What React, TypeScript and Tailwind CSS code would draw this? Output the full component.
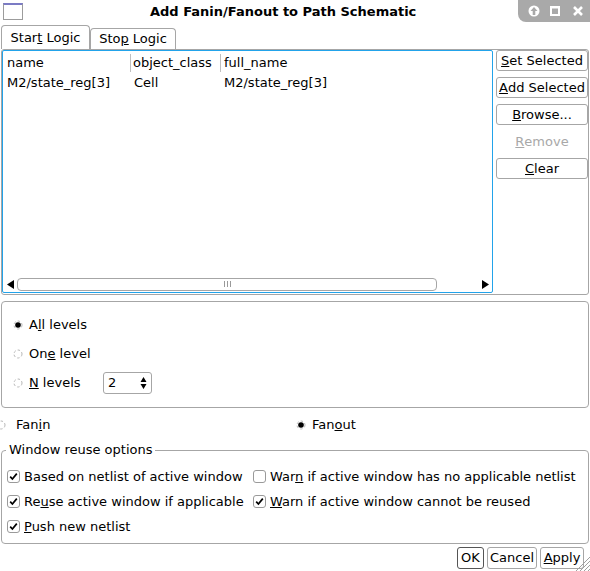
import React from "react";

function Radio({ checked }: { checked?: boolean }) {
    return (
        <svg width="10" height="10" viewBox="0 0 10 10" className="shrink-0">
            <circle cx="5" cy="5" r="4" fill="none" stroke="#b8b8b8" strokeWidth="1" strokeDasharray="2.5 2" />
            {checked && <circle cx="5" cy="5" r="2.8" fill="#000" />}
        </svg>
    );
}

function Check({ checked }: { checked?: boolean }) {
    return (
        <div className="w-[13px] h-[13px] shrink-0 border border-[#9a9a9a] rounded-[3px] flex items-center justify-center bg-white">
            {checked && (
                <svg width="9" height="9" viewBox="0 0 9 9">
                    <path d="M1.2 4.6 L3.4 7 L7.8 1.6" fill="none" stroke="#000" strokeWidth="1.7" />
                </svg>
            )}
        </div>
    );
}

function SideButton({ children, disabled }: { children: React.ReactNode; disabled?: boolean }) {
    return (
        <div
            className={
                disabled
                    ? "h-[21px] flex items-center justify-center text-[#a8a8a8]"
                    : "h-[21px] flex items-center justify-center border border-[#a6a6a6] rounded-[3px]"
            }
        >
            {children}
        </div>
    );
}

export default function App() {
    return (
        <div className="w-[590px] h-[571px] bg-white text-black text-[13px] leading-[16px] font-['DejaVu_Sans',sans-serif] relative overflow-hidden">
            {/* title bar */}
            <div className="h-[24px] flex items-start">
                <div className="mt-[3px] ml-[3px] w-[20px] h-[17px] border border-[#9c9c9c] border-t-[2px] border-t-[#7b7bc4]" />
                <div className="ml-[127px] mt-[4px] font-bold">Add Fanin/Fanout to Path Schematic</div>
                <div className="ml-auto w-[72px] h-[22px] bg-[#a9a9a9] rounded-bl-[8px] flex items-center pl-[10px] gap-[9px]">
                    <svg width="12" height="12" viewBox="0 0 12 12">
                        <circle cx="6" cy="6" r="5.5" fill="#fff" />
                        <path d="M6 2 L9.5 6 L7.3 6 L7.3 10 L4.7 10 L4.7 6 L2.5 6 Z" fill="#a9a9a9" />
                    </svg>
                    <svg width="12" height="12" viewBox="0 0 12 12">
                        <rect x="1" y="1" width="10" height="10" fill="#fff" />
                        <rect x="3" y="3.5" width="6" height="5.5" fill="#a9a9a9" />
                    </svg>
                    <svg width="12" height="12" viewBox="0 0 12 12" className="ml-[2px]">
                        <path d="M2 2 L10 10 M10 2 L2 10" stroke="#fff" strokeWidth="2.6" />
                    </svg>
                </div>
            </div>

            {/* tabs */}
            <div className="h-[24px] mt-[1px] flex items-end">
                <div className="ml-[1px] w-[89px] h-[24px] border border-b-0 border-[#a6a6a6] rounded-t-[4px] flex items-center justify-center">
                    Star<u>t</u>&nbsp;Logic
                </div>
                <div className="w-[86px] h-[21px] border border-b-0 border-[#a6a6a6] rounded-t-[4px] flex items-center justify-center">
                    Sto<u>p</u>&nbsp;Logic
                </div>
            </div>

            {/* tab pane */}
            <div className="mx-[1px] h-[246px] border border-[#a6a6a6] rounded-[3px] flex">
                <div className="w-[491px] h-[243px] border border-[#22a3ea] rounded-[2px] flex flex-col">
                    <div className="h-[24px] flex items-center">
                        <div className="w-[128px] pl-[4px] h-[18px] flex items-center border-r border-[#c0c0c0]">name</div>
                        <div className="w-[90px] pl-[2px] h-[18px] flex items-center border-r border-[#c0c0c0]">object_class</div>
                        <div className="pl-[3px]">full_name</div>
                    </div>
                    <div className="h-[16px] flex items-center">
                        <div className="w-[128px] pl-[4px]">M2/state_reg[3]</div>
                        <div className="w-[90px] pl-[3px]">Cell</div>
                        <div className="pl-[3px]">M2/state_reg[3]</div>
                    </div>
                    <div className="flex-1" />
                    <div className="h-[14px] mb-[1px] flex items-center">
                        <svg width="7" height="9" viewBox="0 0 7 9" className="ml-[4px]">
                            <path d="M0 4.5 L7 0 L7 9 Z" fill="#000" />
                        </svg>
                        <div className="ml-[3px] w-[420px] h-[13px] border border-[#a6a6a6] rounded-[4px] flex items-center justify-center">
                            <svg width="7" height="6" viewBox="0 0 7 6">
                                <path d="M0.5 0 V6 M3.5 0 V6 M6.5 0 V6" stroke="#9a9a9a" strokeWidth="1" />
                            </svg>
                        </div>
                        <svg width="7" height="9" viewBox="0 0 7 9" className="ml-[45px]">
                            <path d="M7 4.5 L0 0 L0 9 Z" fill="#000" />
                        </svg>
                    </div>
                </div>
                <div className="ml-[3px] w-[92px] flex flex-col gap-[6px]">
                    <SideButton><u>S</u>et Selected</SideButton>
                    <SideButton><u>A</u>dd Selected</SideButton>
                    <SideButton><u>B</u>rowse...</SideButton>
                    <SideButton disabled><u>R</u>emove</SideButton>
                    <SideButton><u>C</u>lear</SideButton>
                </div>
            </div>

            {/* levels */}
            <div className="mt-[6px] mx-[1px] h-[107px] border border-[#a6a6a6] rounded-[4px] flex flex-col pt-[8px]">
                <div className="h-[29px] flex items-center pl-[11px]">
                    <Radio checked />
                    <span className="ml-[6px]">A<u>l</u>l levels</span>
                </div>
                <div className="h-[29px] flex items-center pl-[11px]">
                    <Radio />
                    <span className="ml-[6px]">On<u>e</u> level</span>
                </div>
                <div className="h-[29px] flex items-center pl-[11px]">
                    <Radio />
                    <span className="ml-[6px] w-[74px]"><u>N</u> levels</span>
                    <div className="w-[49px] h-[22px] border border-[#a6a6a6] rounded-[3px] flex items-center pl-[4px]">
                        <span className="flex-1">2</span>
                        <svg width="7" height="14" viewBox="0 0 7 14" className="mr-[4px]">
                            <path d="M3.5 1 L6.5 6 L0.5 6 Z M3.5 13 L6.5 8 L0.5 8 Z" fill="#000" />
                        </svg>
                    </div>
                </div>
            </div>

            {/* fanin / fanout */}
            <div className="h-[34px] flex items-center">
                <div className="w-[296px] flex items-center">
                    <div className="-ml-[4px]"><Radio /></div>
                    <span className="ml-[10px]">Fan<u>i</u>n</span>
                </div>
                <Radio checked />
                <span className="ml-[6px]">Fan<u>o</u>ut</span>
            </div>

            {/* window reuse */}
            <fieldset className="mx-[1px] h-[102px] border border-[#a6a6a6] rounded-[4px] pt-[6px]">
                <legend className="ml-[4px] px-[3px]">Window reuse options</legend>
                <div className="grid grid-cols-[246px_1fr] pl-[5px]">
                    <div className="h-[25px] flex items-center">
                        <Check checked />
                        <span className="ml-[4px]">Based on netlist of active window</span>
                    </div>
                    <div className="h-[25px] flex items-center">
                        <Check />
                        <span className="ml-[4px]">War<u>n</u> if active window has no applicable netlist</span>
                    </div>
                    <div className="h-[25px] flex items-center">
                        <Check checked />
                        <span className="ml-[4px]">Re<u>u</u>se active window if applicable</span>
                    </div>
                    <div className="h-[25px] flex items-center">
                        <Check checked />
                        <span className="ml-[4px]"><u>W</u>arn if active window cannot be reused</span>
                    </div>
                    <div className="h-[25px] flex items-center">
                        <Check checked />
                        <span className="ml-[4px]"><u>P</u>ush new netlist</span>
                    </div>
                </div>
            </fieldset>

            {/* bottom buttons */}
            <div className="mt-[3px] flex justify-end gap-[3px] pr-[6px]">
                <div className="w-[27px] h-[22px] border border-[#555] rounded-[3px] flex items-center justify-center">OK</div>
                <div className="w-[50px] h-[22px] border border-[#a6a6a6] rounded-[3px] flex items-center justify-center">Cancel</div>
                <div className="w-[44px] h-[22px] border border-[#a6a6a6] rounded-[3px] flex items-center justify-center"><u>A</u>pply</div>
            </div>

            {/* resize grip */}
            <svg width="16" height="16" viewBox="0 0 16 16" className="absolute right-0 bottom-0">
                <path d="M16 2 L2 16 M16 6 L6 16 M16 10 L10 16 M16 14 L14 16" stroke="#a0a0a0" strokeWidth="1" />
            </svg>
        </div>
    );
}
